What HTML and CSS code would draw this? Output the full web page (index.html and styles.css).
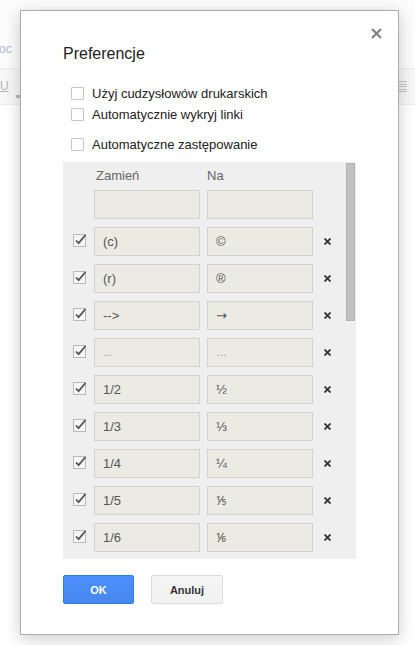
FILE: index.html
```html
<!DOCTYPE html>
<html lang="pl">
<head>
<meta charset="utf-8">
<title>Preferencje</title>
<link rel="stylesheet" href="styles.css">
</head>
<body>
<div class="page">
  <div class="doc-head"><span class="doc-name">oc</span></div>
  <div class="toolbar">
    <span class="tb-u">U</span>
    <span class="tb-bar"></span>
    <span class="tb-spacer"></span>
    <span class="tb-list"><i></i><i></i><i></i><i></i><i></i></span>
  </div>
</div>

<div class="dialog" role="dialog">
  <svg class="close" width="11" height="11" viewBox="0 0 11 11"><path d="M1 1 L10 10 M10 1 L1 10" stroke="#808080" stroke-width="2.2" fill="none"/></svg>
  <h1 class="title">Preferencje</h1>

  <div class="opts">
    <label class="opt"><span class="cb"></span><span>Użyj cudzysłowów drukarskich</span></label>
    <label class="opt"><span class="cb"></span><span>Automatycznie wykryj linki</span></label>
    <label class="opt opt-gap"><span class="cb"></span><span>Automatyczne zastępowanie</span></label>
  </div>

  <div class="panel">
    <div class="thumb"></div>
    <div class="head">
      <span class="cbspace"></span>
      <span class="hcell hcell-a">Zamień</span>
      <span class="hcell hcell-b">Na</span>
    </div>
    <div class="row">
      <span class="cbspace"></span>
      <div class="field"></div>
      <div class="field field-b"></div>
    </div>

    <div class="row"><span class="ck"><svg width="14" height="14" viewBox="0 0 14 14"><rect x="0.5" y="0.5" width="12" height="12" fill="#f6f6f6" stroke="#b9b9b9"/><path d="M3 6.5 L5.6 9.2 L12.5 1" stroke="#555" stroke-width="1.8" fill="none"/></svg></span><div class="field">(c)</div><div class="field field-b">©</div><span class="del"><svg width="7" height="7" viewBox="0 0 7 7"><path d="M0.5 0.5 L6.5 6.5 M6.5 0.5 L0.5 6.5" stroke="#333" stroke-width="1.8"/></svg></span></div>
    <div class="row"><span class="ck"><svg width="14" height="14" viewBox="0 0 14 14"><rect x="0.5" y="0.5" width="12" height="12" fill="#f6f6f6" stroke="#b9b9b9"/><path d="M3 6.5 L5.6 9.2 L12.5 1" stroke="#555" stroke-width="1.8" fill="none"/></svg></span><div class="field">(r)</div><div class="field field-b">®</div><span class="del"><svg width="7" height="7" viewBox="0 0 7 7"><path d="M0.5 0.5 L6.5 6.5 M6.5 0.5 L0.5 6.5" stroke="#333" stroke-width="1.8"/></svg></span></div>
    <div class="row"><span class="ck"><svg width="14" height="14" viewBox="0 0 14 14"><rect x="0.5" y="0.5" width="12" height="12" fill="#f6f6f6" stroke="#b9b9b9"/><path d="M3 6.5 L5.6 9.2 L12.5 1" stroke="#555" stroke-width="1.8" fill="none"/></svg></span><div class="field">--&gt;</div><div class="field field-b arrow">→</div><span class="del"><svg width="7" height="7" viewBox="0 0 7 7"><path d="M0.5 0.5 L6.5 6.5 M6.5 0.5 L0.5 6.5" stroke="#333" stroke-width="1.8"/></svg></span></div>
    <div class="row"><span class="ck"><svg width="14" height="14" viewBox="0 0 14 14"><rect x="0.5" y="0.5" width="12" height="12" fill="#f6f6f6" stroke="#b9b9b9"/><path d="M3 6.5 L5.6 9.2 L12.5 1" stroke="#555" stroke-width="1.8" fill="none"/></svg></span><div class="field field-dots">...</div><div class="field field-b field-dots">…</div><span class="del"><svg width="7" height="7" viewBox="0 0 7 7"><path d="M0.5 0.5 L6.5 6.5 M6.5 0.5 L0.5 6.5" stroke="#333" stroke-width="1.8"/></svg></span></div>
    <div class="row"><span class="ck"><svg width="14" height="14" viewBox="0 0 14 14"><rect x="0.5" y="0.5" width="12" height="12" fill="#f6f6f6" stroke="#b9b9b9"/><path d="M3 6.5 L5.6 9.2 L12.5 1" stroke="#555" stroke-width="1.8" fill="none"/></svg></span><div class="field">1/2</div><div class="field field-b">½</div><span class="del"><svg width="7" height="7" viewBox="0 0 7 7"><path d="M0.5 0.5 L6.5 6.5 M6.5 0.5 L0.5 6.5" stroke="#333" stroke-width="1.8"/></svg></span></div>
    <div class="row"><span class="ck"><svg width="14" height="14" viewBox="0 0 14 14"><rect x="0.5" y="0.5" width="12" height="12" fill="#f6f6f6" stroke="#b9b9b9"/><path d="M3 6.5 L5.6 9.2 L12.5 1" stroke="#555" stroke-width="1.8" fill="none"/></svg></span><div class="field">1/3</div><div class="field field-b">⅓</div><span class="del"><svg width="7" height="7" viewBox="0 0 7 7"><path d="M0.5 0.5 L6.5 6.5 M6.5 0.5 L0.5 6.5" stroke="#333" stroke-width="1.8"/></svg></span></div>
    <div class="row"><span class="ck"><svg width="14" height="14" viewBox="0 0 14 14"><rect x="0.5" y="0.5" width="12" height="12" fill="#f6f6f6" stroke="#b9b9b9"/><path d="M3 6.5 L5.6 9.2 L12.5 1" stroke="#555" stroke-width="1.8" fill="none"/></svg></span><div class="field">1/4</div><div class="field field-b">¼</div><span class="del"><svg width="7" height="7" viewBox="0 0 7 7"><path d="M0.5 0.5 L6.5 6.5 M6.5 0.5 L0.5 6.5" stroke="#333" stroke-width="1.8"/></svg></span></div>
    <div class="row"><span class="ck"><svg width="14" height="14" viewBox="0 0 14 14"><rect x="0.5" y="0.5" width="12" height="12" fill="#f6f6f6" stroke="#b9b9b9"/><path d="M3 6.5 L5.6 9.2 L12.5 1" stroke="#555" stroke-width="1.8" fill="none"/></svg></span><div class="field">1/5</div><div class="field field-b">⅕</div><span class="del"><svg width="7" height="7" viewBox="0 0 7 7"><path d="M0.5 0.5 L6.5 6.5 M6.5 0.5 L0.5 6.5" stroke="#333" stroke-width="1.8"/></svg></span></div>
    <div class="row"><span class="ck"><svg width="14" height="14" viewBox="0 0 14 14"><rect x="0.5" y="0.5" width="12" height="12" fill="#f6f6f6" stroke="#b9b9b9"/><path d="M3 6.5 L5.6 9.2 L12.5 1" stroke="#555" stroke-width="1.8" fill="none"/></svg></span><div class="field">1/6</div><div class="field field-b">⅙</div><span class="del"><svg width="7" height="7" viewBox="0 0 7 7"><path d="M0.5 0.5 L6.5 6.5 M6.5 0.5 L0.5 6.5" stroke="#333" stroke-width="1.8"/></svg></span></div>
  </div>

  <div class="buttons">
    <button class="btn btn-ok">OK</button>
    <button class="btn btn-cancel">Anuluj</button>
  </div>
</div>
</body>
</html>
```

FILE: styles.css
```css
* { box-sizing: border-box; }
html, body { margin: 0; padding: 0; }
body {
  width: 415px;
  height: 645px;
  overflow: hidden;
  background: #ffffff;
  font-family: "Liberation Sans", Arial, sans-serif;
  position: relative;
}

/* background page */
.page { width: 415px; }
.doc-head {
  height: 68px;
  padding-top: 42px;
  background: #fcfcfc;
}
.doc-name {
  display: block;
  margin-left: -1px;
  font-size: 12px;
  line-height: 14px;
  color: #b2b7cc;
}
.toolbar {
  height: 37px;
  display: flex;
  align-items: flex-start;
  background: #f7f7f7;
  border-top: 1px solid #ececec;
  border-bottom: 1px solid #ededed;
}
.tb-u {
  margin-left: 0;
  margin-top: 11px;
  font-size: 12px;
  line-height: 13px;
  color: #b5b5b5;
  text-decoration: underline;
}
.tb-bar {
  width: 6px;
  height: 3px;
  margin-top: 26px;
  margin-left: 7px;
  background: #b9b9b9;
}
.tb-spacer { flex: 1; }
.tb-list {
  display: flex;
  flex-direction: column;
  gap: 1.5px;
  width: 9px;
  margin-top: 12px;
  margin-right: 8px;
}
.tb-list i {
  display: block;
  height: 1px;
  background: #c4c4c4;
}

/* dialog */
.dialog {
  position: absolute;
  left: 20px;
  top: 10px;
  width: 379px;
  height: 625px;
  background: #fff;
  border: 1px solid #acacac;
  box-shadow: 0 4px 16px rgba(0, 0, 0, 0.2);
  padding: 33px 41px 0 42px;
  color: #222;
}
.close {
  position: absolute;
  top: 17px;
  right: 16px;
}
.title {
  margin: 0;
  font-weight: normal;
  font-size: 16px;
  line-height: 20px;
  color: #222;
}
.opts {
  margin-top: 19px;
  padding-left: 8px;
}
.opt {
  display: flex;
  align-items: center;
  height: 21px;
  font-size: 13px;
  color: #222;
}
.opt-gap { margin-top: 9px; }
.cb {
  width: 13px;
  height: 13px;
  margin-right: 8px;
  border: 1px solid #c6c6c6;
  border-radius: 1px;
  background: #fff;
  flex: none;
}

/* substitutions panel */
.panel {
  position: relative;
  margin-top: 7px;
  width: 293px;
  height: 397px;
  overflow: hidden;
  background: #efefef;
  padding: 6px 0 0 10px;
}
.thumb {
  position: absolute;
  top: 1px;
  right: 1px;
  width: 9px;
  height: 158px;
  background: #c0c0c0;
  border: 1px solid #b3b3b3;
}
.head {
  display: flex;
  gap: 8px;
  height: 16px;
  margin-bottom: 6px;
  font-size: 13px;
  line-height: 16px;
  color: #666;
}
.hcell { width: 106px; }
.hcell-a { padding-left: 2px; }
.hcell-b { margin-left: -1px; }
.cbspace { width: 13px; flex: none; }
.row {
  display: flex;
  align-items: center;
  gap: 8px;
  height: 29px;
  margin-bottom: 8px;
}
.ck {
  width: 13px;
  height: 29px;
  flex: none;
  padding-top: 7px;
}
.ck svg { display: block; overflow: visible; }
.field {
  width: 106px;
  height: 29px;
  flex: none;
  border: 1px solid #d4d4cf;
  background: #ebebe4;
  padding-left: 8px;
  font-size: 13px;
  line-height: 27px;
  color: #555;
}
.field-b { margin-left: -1px; }
.field-dots { color: #999; font-size: 11px; }
.arrow { font-family: "DejaVu Sans", sans-serif; font-size: 13px; }
.del {
  margin-left: 3px;
  width: 7px;
  height: 7px;
  flex: none;
}
.del svg { display: block; }

/* buttons */
.buttons {
  display: flex;
  gap: 17px;
  margin-top: 16px;
}
.btn {
  height: 29px;
  width: 71px;
  padding: 0;
  font-family: "Liberation Sans", Arial, sans-serif;
  font-size: 11px;
  font-weight: bold;
  border-radius: 2px;
  cursor: default;
}
.btn-ok {
  color: #fff;
  background: linear-gradient(#4d90fe, #4787ed);
  border: 1px solid #3079ed;
}
.btn-cancel {
  width: 72px;
  color: #333;
  background: linear-gradient(#f5f5f5, #f1f1f1);
  border: 1px solid #dcdcdc;
}
```
